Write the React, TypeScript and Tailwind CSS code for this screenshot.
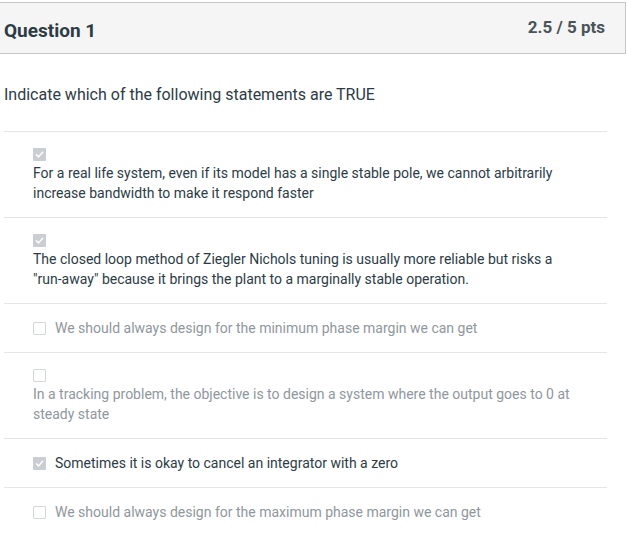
const OPTIONS = [
  {
    text: "For a real life system, even if its model has a single stable pole, we cannot arbitrarily increase bandwidth to make it respond faster",
    checked: true,
    wrap: true,
  },
  {
    text: 'The closed loop method of Ziegler Nichols tuning is usually more reliable but risks a "run-away" because it brings the plant to a marginally stable operation.',
    checked: true,
    wrap: true,
  },
  { text: "We should always design for the minimum phase margin we can get", checked: false, wrap: false },
  {
    text: "In a tracking problem, the objective is to design a system where the output goes to 0 at steady state",
    checked: false,
    wrap: true,
  },
  { text: "Sometimes it is okay to cancel an integrator with a zero", checked: true, wrap: false },
  { text: "We should always design for the maximum phase margin we can get", checked: false, wrap: false },
];

function Box({ checked }: { checked: boolean }) {
  if (checked) {
    return (
      <span className="inline-flex h-[13px] w-[13px] shrink-0 items-center justify-center rounded-[1px] bg-[#c9ced2]">
        <svg viewBox="0 0 12 12" className="h-[11px] w-[11px]" fill="none" stroke="#fff" strokeWidth="1.6" strokeLinecap="round" strokeLinejoin="round">
          <path d="M2.6 6.3 L5 8.6 L9.4 3.6" />
        </svg>
      </span>
    );
  }
  return <span className="inline-block h-[13px] w-[13px] shrink-0 rounded-[1px] border border-[#d3d7da] bg-white" />;
}

export default function App() {
  return (
    <div className="h-[550px] w-[627px] bg-white font-['Roboto',sans-serif] text-[#2d3b45]">
      <div className="h-[2px]" />
      <div className="flex h-[52px] w-[626px] items-start justify-between border-y border-r border-[#c4c8cb] bg-[#f5f5f5] pl-1 pr-[20px]">
        <h2 className="mt-[16px] text-[19px] leading-[24px] font-bold">Question 1</h2>
        <span className="mt-[13px] text-[17px] leading-[22px] font-bold text-[#4a535a]">2.5 / 5 pts</span>
      </div>

      <div className="w-[607px] pl-1">
        <p className="pt-[29px] pb-[24px] text-[16px] leading-[24px]">Indicate which of the following statements are TRUE</p>
        <ul>
          {OPTIONS.map((o, i) => (
            <li
              key={i}
              className={`border-t border-[#e4e6e8] py-[14px] pl-[29px] pr-[32px] text-[14px] leading-[20px] ${o.checked ? "text-[#2d3b45]" : "text-[#8f979d]"}`}
            >
              {o.wrap ? (
                <div>
                  <div className="flex h-[17px] items-center">
                    <Box checked={o.checked} />
                  </div>
                  <div>{o.text}</div>
                </div>
              ) : (
                <div className="flex items-center gap-[9px]">
                  <Box checked={o.checked} />
                  <span>{o.text}</span>
                </div>
              )}
            </li>
          ))}
        </ul>
      </div>
    </div>
  );
}
